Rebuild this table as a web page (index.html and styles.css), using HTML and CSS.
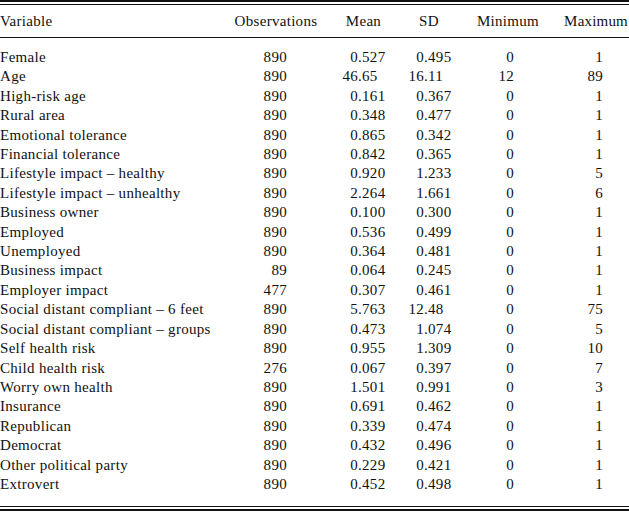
FILE: index.html
```html
<!DOCTYPE html>
<html lang="en">
<head>
<meta charset="utf-8">
<title>Descriptive statistics</title>
<link rel="stylesheet" href="styles.css">
</head>
<body>
<div class="frame">
<table class="stats">
<colgroup>
<col class="c-var"><col class="c-obs"><col class="c-mean"><col class="c-sd"><col class="c-min"><col class="c-max">
</colgroup>
<thead>
<tr><th class="var">Variable</th><th>Observations</th><th>Mean</th><th>SD</th><th class="minh">Minimum</th><th class="max">Maximum</th></tr>
</thead>
<tbody>
<tr><td>Female</td><td class="obs">890</td><td class="mean"><span class="i">0</span>.527</td><td class="sd"><span class="i">0</span>.495</td><td class="min">0</td><td class="mx">1</td></tr>
<tr><td>Age</td><td class="obs">890</td><td class="mean"><span class="i">46</span>.65</td><td class="sd"><span class="i">16</span>.11</td><td class="min">12</td><td class="mx">89</td></tr>
<tr><td>High-risk age</td><td class="obs">890</td><td class="mean"><span class="i">0</span>.161</td><td class="sd"><span class="i">0</span>.367</td><td class="min">0</td><td class="mx">1</td></tr>
<tr><td>Rural area</td><td class="obs">890</td><td class="mean"><span class="i">0</span>.348</td><td class="sd"><span class="i">0</span>.477</td><td class="min">0</td><td class="mx">1</td></tr>
<tr><td>Emotional tolerance</td><td class="obs">890</td><td class="mean"><span class="i">0</span>.865</td><td class="sd"><span class="i">0</span>.342</td><td class="min">0</td><td class="mx">1</td></tr>
<tr><td>Financial tolerance</td><td class="obs">890</td><td class="mean"><span class="i">0</span>.842</td><td class="sd"><span class="i">0</span>.365</td><td class="min">0</td><td class="mx">1</td></tr>
<tr><td>Lifestyle impact – healthy</td><td class="obs">890</td><td class="mean"><span class="i">0</span>.920</td><td class="sd"><span class="i">1</span>.233</td><td class="min">0</td><td class="mx">5</td></tr>
<tr><td>Lifestyle impact – unhealthy</td><td class="obs">890</td><td class="mean"><span class="i">2</span>.264</td><td class="sd"><span class="i">1</span>.661</td><td class="min">0</td><td class="mx">6</td></tr>
<tr><td>Business owner</td><td class="obs">890</td><td class="mean"><span class="i">0</span>.100</td><td class="sd"><span class="i">0</span>.300</td><td class="min">0</td><td class="mx">1</td></tr>
<tr><td>Employed</td><td class="obs">890</td><td class="mean"><span class="i">0</span>.536</td><td class="sd"><span class="i">0</span>.499</td><td class="min">0</td><td class="mx">1</td></tr>
<tr><td>Unemployed</td><td class="obs">890</td><td class="mean"><span class="i">0</span>.364</td><td class="sd"><span class="i">0</span>.481</td><td class="min">0</td><td class="mx">1</td></tr>
<tr><td>Business impact</td><td class="obs">89</td><td class="mean"><span class="i">0</span>.064</td><td class="sd"><span class="i">0</span>.245</td><td class="min">0</td><td class="mx">1</td></tr>
<tr><td>Employer impact</td><td class="obs">477</td><td class="mean"><span class="i">0</span>.307</td><td class="sd"><span class="i">0</span>.461</td><td class="min">0</td><td class="mx">1</td></tr>
<tr><td>Social distant compliant – 6 feet</td><td class="obs">890</td><td class="mean"><span class="i">5</span>.763</td><td class="sd"><span class="i">12</span>.48</td><td class="min">0</td><td class="mx">75</td></tr>
<tr><td>Social distant compliant – groups</td><td class="obs">890</td><td class="mean"><span class="i">0</span>.473</td><td class="sd"><span class="i">1</span>.074</td><td class="min">0</td><td class="mx">5</td></tr>
<tr><td>Self health risk</td><td class="obs">890</td><td class="mean"><span class="i">0</span>.955</td><td class="sd"><span class="i">1</span>.309</td><td class="min">0</td><td class="mx">10</td></tr>
<tr><td>Child health risk</td><td class="obs">276</td><td class="mean"><span class="i">0</span>.067</td><td class="sd"><span class="i">0</span>.397</td><td class="min">0</td><td class="mx">7</td></tr>
<tr><td>Worry own health</td><td class="obs">890</td><td class="mean"><span class="i">1</span>.501</td><td class="sd"><span class="i">0</span>.991</td><td class="min">0</td><td class="mx">3</td></tr>
<tr><td>Insurance</td><td class="obs">890</td><td class="mean"><span class="i">0</span>.691</td><td class="sd"><span class="i">0</span>.462</td><td class="min">0</td><td class="mx">1</td></tr>
<tr><td>Republican</td><td class="obs">890</td><td class="mean"><span class="i">0</span>.339</td><td class="sd"><span class="i">0</span>.474</td><td class="min">0</td><td class="mx">1</td></tr>
<tr><td>Democrat</td><td class="obs">890</td><td class="mean"><span class="i">0</span>.432</td><td class="sd"><span class="i">0</span>.496</td><td class="min">0</td><td class="mx">1</td></tr>
<tr><td>Other political party</td><td class="obs">890</td><td class="mean"><span class="i">0</span>.229</td><td class="sd"><span class="i">0</span>.421</td><td class="min">0</td><td class="mx">1</td></tr>
<tr><td>Extrovert</td><td class="obs">890</td><td class="mean"><span class="i">0</span>.452</td><td class="sd"><span class="i">0</span>.498</td><td class="min">0</td><td class="mx">1</td></tr>
</tbody>
</table>
</div>
</body>
</html>
```
FILE: styles.css
```css
html, body {
  margin: 0;
  padding: 0;
  background: #fff;
}
body {
  font-family: "Liberation Serif", "Times New Roman", serif;
  font-size: 15px;
  letter-spacing: 0.3px;
  color: #111;
}
.frame {
  width: 629px;
  border-top: 2px solid #111;
  border-bottom: 2px solid #111;
  padding: 2px 0;
}
.stats {
  width: 100%;
  table-layout: fixed;
  border-collapse: separate;
  border-spacing: 0;
  border-top: 1px solid #111;
  border-bottom: 1px solid #111;
}
.c-var { width: 232px; }
.c-obs { width: 88px; }
.c-mean { width: 87px; }
.c-sd { width: 44px; }
.c-min { width: 110px; }
.c-max { width: 68px; }

.stats th {
  font-weight: normal;
  height: 32px;
  padding: 0;
  line-height: 32px;
  text-align: center;
  white-space: nowrap;
  border-bottom: 1px solid #111;
}
.stats th.var { text-align: left; }
.stats th.minh { padding-left: 4px; }
.stats th.max { text-align: right; padding-right: 1px; letter-spacing: 0.2px; }

.stats td {
  padding: 0;
  line-height: 19.4px;
  height: 19.4px;
  white-space: nowrap;
  overflow: visible;
}
.stats tbody tr:first-child td { padding-top: 10px; }
.stats tbody tr:last-child td { padding-bottom: 12px; }

.stats td.obs { text-align: right; padding-right: 33px; }
.stats td.mean { padding-left: 22px; }
.stats td.sd { padding-left: 1px; }
.i { display: inline-block; width: 16px; text-align: right; }
.stats td.min { text-align: right; padding-right: 47px; }
.stats td.mx { text-align: right; padding-right: 26px; }
```
